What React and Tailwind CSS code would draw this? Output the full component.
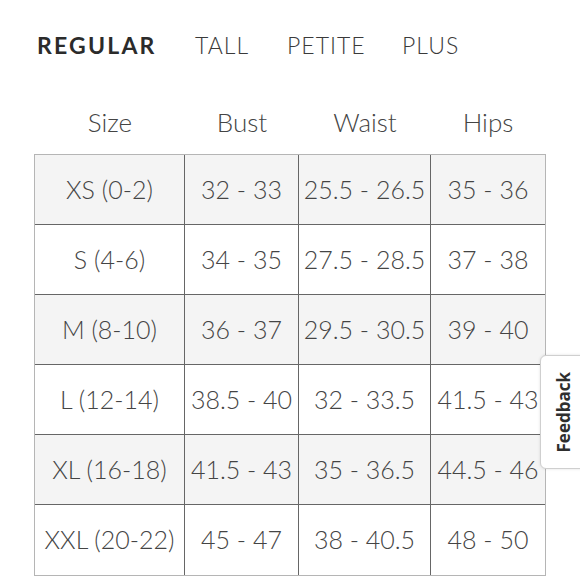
import React from "react";

const rows = [
  ["XS (0-2)", "32 - 33", "25.5 - 26.5", "35 - 36"],
  ["S (4-6)", "34 - 35", "27.5 - 28.5", "37 - 38"],
  ["M (8-10)", "36 - 37", "29.5 - 30.5", "39 - 40"],
  ["L (12-14)", "38.5 - 40", "32 - 33.5", "41.5 - 43"],
  ["XL (16-18)", "41.5 - 43", "35 - 36.5", "44.5 - 46"],
  ["XXL (20-22)", "45 - 47", "38 - 40.5", "48 - 50"],
];

export default function App() {
  return (
    <div
      className="relative w-[580px] h-[580px] bg-white text-[#3a3a3a] overflow-hidden"
      style={{ fontFamily: "Lato, 'Open Sans', sans-serif" }}
    >
      {/* tabs */}
      <div className="flex items-center pl-[37px] pt-[29px] h-[32px] box-content text-[23px] leading-none">
        <span className="font-bold tracking-[2.2px] text-[#2b2b2b] w-[158px]">REGULAR</span>
        <span className="font-light tracking-[1px] w-[92px]">TALL</span>
        <span className="font-light tracking-[1px] w-[115px]">PETITE</span>
        <span className="font-light tracking-[1px]">PLUS</span>
      </div>

      {/* header */}
      <div className="grid grid-cols-[150px_114px_132px_114px] ml-[35px] mt-[42px] h-[32px] items-center text-[26px] font-light text-[#444]">
        <div className="text-center">Size</div>
        <div className="text-center">Bust</div>
        <div className="text-center">Waist</div>
        <div className="text-center">Hips</div>
      </div>

      {/* table */}
      <div className="ml-[34px] mt-[19px] w-[512px] border border-[#b5b5b5]">
        {rows.map((r, i) => (
          <div
            key={i}
            className={`grid grid-cols-[150px_114px_132px_114px] h-[70px] ${
              i % 2 === 0 ? "bg-[#f4f4f4]" : "bg-white"
            } ${i < rows.length - 1 ? "border-b border-[#666]" : ""}`}
          >
            {r.map((c, j) => (
              <div
                key={j}
                className={`flex items-center justify-center text-[25px] font-light text-[#444] whitespace-nowrap ${
                  j < 3 ? "border-r border-[#666]" : ""
                }`}
              >
                {c}
              </div>
            ))}
          </div>
        ))}
      </div>

      {/* feedback tab */}
      <div className="absolute left-[540px] top-[355px] w-[48px] h-[114px] bg-white border border-[#cfcfcf] rounded-l-md shadow-[0_0_3px_rgba(0,0,0,0.12)] flex items-center pl-[10px]">
        <span
          className="font-bold text-[17px] text-[#2e2e2e] rotate-180 [writing-mode:vertical-rl]"
          style={{ fontFamily: "'Open Sans', Arial, sans-serif" }}
        >
          Feedback
        </span>
      </div>
    </div>
  );
}
